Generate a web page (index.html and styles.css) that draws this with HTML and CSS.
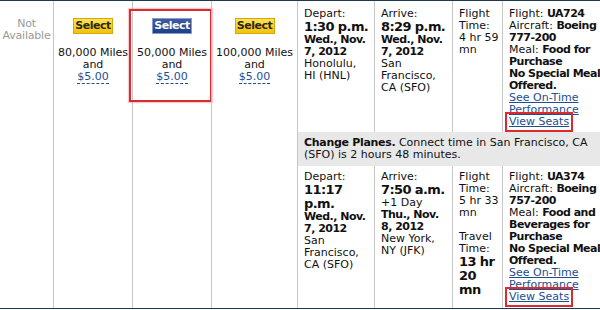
FILE: index.html
```html
<!DOCTYPE html>
<html>
<head>
<meta charset="utf-8">
<link rel="stylesheet" href="styles.css">
</head>
<body>
<div class="results">
  <div class="cell na">Not<br>Available</div>
  <div class="cell fare">
    <span class="btn yellow">Select</span>
    <div class="miles">80,000 Miles<br>and<br><a class="price">$5.00</a></div>
  </div>
  <div class="cell fare">
    <div class="mark"></div>
    <span class="btn blue">Select</span>
    <div class="miles">50,000 Miles<br>and<br><a class="price">$5.00</a></div>
  </div>
  <div class="cell fare">
    <span class="btn yellow">Select</span>
    <div class="miles">100,000 Miles<br>and<br><a class="price">$5.00</a></div>
  </div>
  <div class="cell flights">
    <div class="seg seg1">
      <div class="col dep">Depart:<br><b class="big">1:30 p.m.</b><br><b>Wed., Nov.<br>7, 2012</b><br>Honolulu,<br>HI (HNL)</div>
      <div class="col arr">Arrive:<br><b class="big">8:29 p.m.</b><br><b>Wed., Nov.<br>7, 2012</b><br>San<br>Francisco,<br>CA (SFO)</div>
      <div class="col dur">Flight<br>Time:<br>4 hr 59<br>mn</div>
      <div class="col info">Flight: <b>UA724</b><br>Aircraft: <b>Boeing<br>777-200</b><br>Meal: <b>Food for<br>Purchase<br>No Special Meal<br>Offered.</b><br><a class="lnk">See On-Time<br>Performance</a><br><a class="lnk seats">View Seats</a></div>
    </div>
    <div class="change"><b class="title">Change Planes.</b> <span>Connect time in San Francisco, CA</span><br><span>(SFO) is 2 hours 48 minutes.</span></div>
    <div class="seg seg2">
      <div class="col dep">Depart:<br><b class="big">11:17<br>p.m.</b><br><b>Wed., Nov.<br>7, 2012</b><br>San<br>Francisco,<br>CA (SFO)</div>
      <div class="col arr">Arrive:<br><b class="big">7:50 a.m.</b><br>+1 Day<br><b>Thu., Nov.<br>8, 2012</b><br>New York,<br>NY (JFK)</div>
      <div class="col dur">Flight<br>Time:<br>5 hr 33<br>mn<div class="travel">Travel<br>Time:<br><b class="big">13 hr<br>20<br>mn</b></div></div>
      <div class="col info">Flight: <b>UA374</b><br>Aircraft: <b>Boeing<br>757-200</b><br>Meal: <b>Food and<br>Beverages for<br>Purchase<br>No Special Meal<br>Offered.</b><br><a class="lnk">See On-Time<br>Performance</a><br><a class="lnk seats">View Seats</a></div>
    </div>
  </div>
</div>
</body>
</html>
```
FILE: styles.css
```css
html, body {
  margin: 0;
  padding: 0;
  background: #fff;
  overflow: hidden;
}
body {
  width: 600px;
  height: 310px;
  font-family: "DejaVu Sans", Verdana, sans-serif;
  font-size: 11px;
  line-height: 12px;
  color: #111;
}
b {
  letter-spacing: -0.5px;
}
.results {
  display: grid;
  grid-template-columns: 53px 79px 79px 86px 320px;
  height: 309px;
  box-sizing: border-box;
  border-top: 1px solid #1e3a4e;
  border-bottom: 1px solid #1e3a4e;
}
.cell {
  box-sizing: border-box;
  border-left: 1px solid #c6c6c6;
}
.na {
  border-left: none;
  color: #9a9a9a;
  text-align: center;
  padding-top: 17px;
  letter-spacing: -0.2px;
}
.fare {
  position: relative;
  text-align: center;
  padding-top: 17px;
}
.btn {
  display: inline-block;
  box-sizing: border-box;
  width: 40px;
  height: 16px;
  font-weight: bold;
  font-size: 11px;
  line-height: 14px;
  letter-spacing: -0.5px;
}
.yellow {
  background: linear-gradient(#ffe35c, #f1c10c);
  border: 1px solid #d8a800;
  color: #2a2a10;
}
.blue {
  background: linear-gradient(#3c5da4, #1e3f86);
  border: 1px solid #8a9cc6;
  color: #fff;
}
.miles {
  margin-top: 13px;
}
.price {
  color: #1d4e8f;
  text-decoration: none;
  border-bottom: 1px dashed #1d4e8f;
}
.mark {
  position: absolute;
  left: -4px;
  top: 8px;
  width: 83px;
  height: 93px;
  box-sizing: border-box;
  border: 2px solid #dc2a2f;
  box-shadow: 0 0 1px 1px rgba(230, 110, 110, 0.35);
}
.flights {
  display: flex;
  flex-direction: column;
}
.seg {
  display: grid;
  grid-template-columns: 76px 78px 50px 115px;
}
.seg1 {
  height: 131px;
}
.seg2 {
  flex: 1;
}
.col {
  box-sizing: border-box;
  padding: 7px 0 0 6px;
}
.seg2 .col {
  padding-top: 5px;
}
.col + .col {
  border-left: 1px solid #c6c6c6;
}
.big {
  font-size: 13px;
  line-height: 14px;
  letter-spacing: -0.6px;
}
.travel {
  margin-top: 12px;
}
.change {
  background: #e8e8e8;
  height: 34px;
  box-sizing: border-box;
  padding: 5px 0 0 6px;
  width: 303px;
  white-space: nowrap;
}
.change .title {
  letter-spacing: -0.3px;
}
.lnk {
  color: #1d4e8f;
  text-decoration: underline;
}
.seats {
  display: inline-block;
  outline: 2px solid #dc2a2f;
  outline-offset: 2px;
  line-height: 12px;
}
```
